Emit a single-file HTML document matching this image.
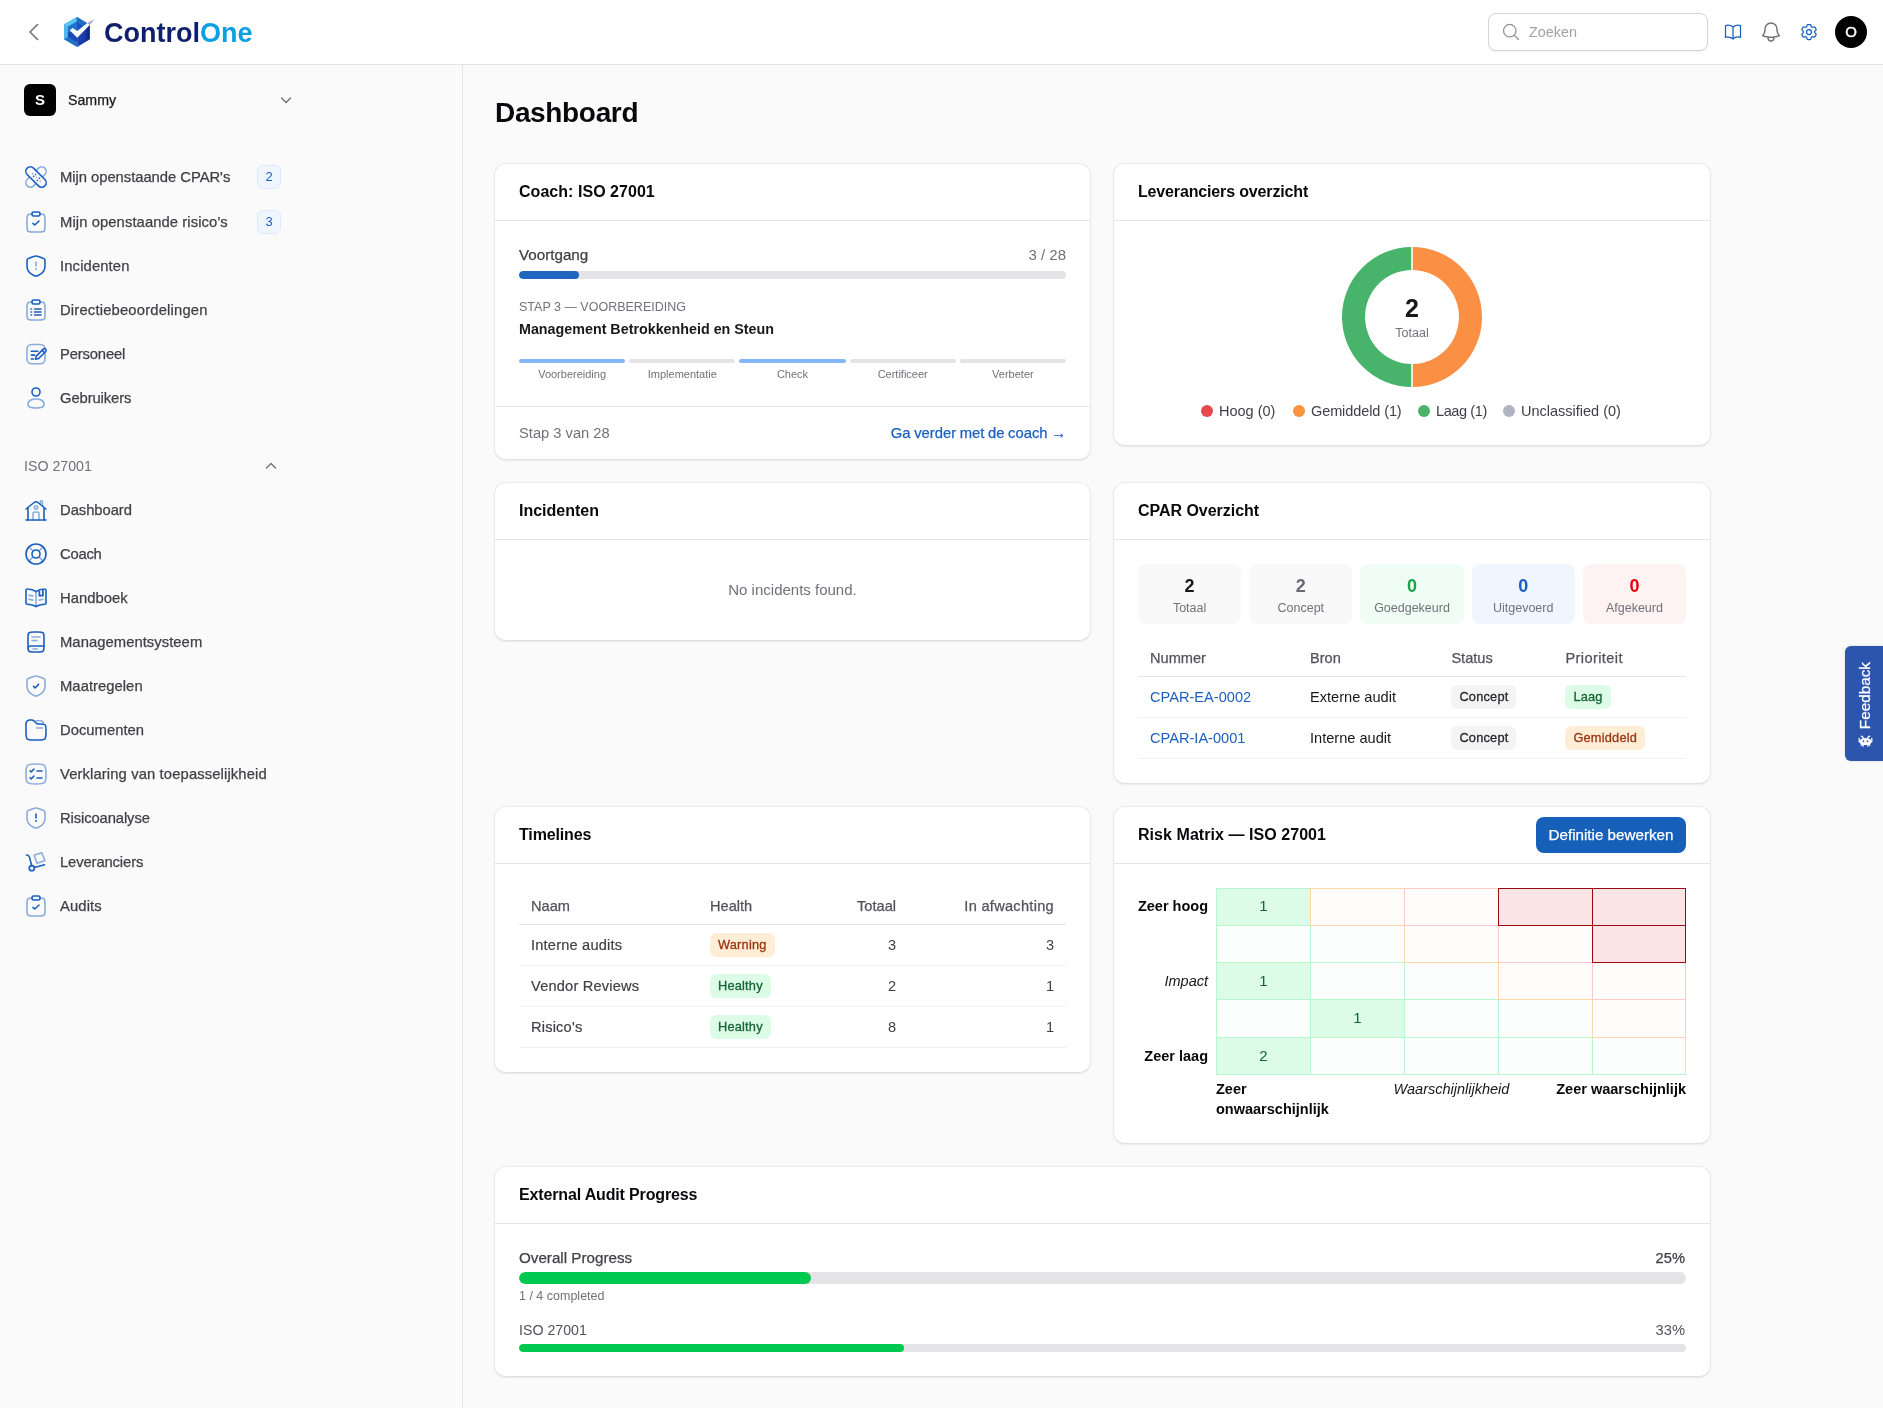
<!DOCTYPE html>
<html lang="nl">
<head>
<meta charset="utf-8">
<title>Dashboard - ControlOne</title>
<style>
*{box-sizing:border-box;margin:0;padding:0}
html,body{width:1883px;height:1408px;overflow:hidden}
body{font-family:"Liberation Sans",Arial,sans-serif;font-size:15px;line-height:20px;color:#3f3f46;background:#fafafa;position:relative;-webkit-font-smoothing:antialiased}
a{color:#1d5fc0;text-decoration:none}
svg{display:block}
/* ---------- top bar ---------- */
.top{position:absolute;left:0;top:0;width:1883px;height:65px;background:#fff;border-bottom:1px solid #e4e4e7}
.back{position:absolute;left:23.2px;top:20px;width:24px;height:24px}
.logo{position:absolute;left:62px;top:14px;width:36px;height:36px}
.brand{position:absolute;left:104px;top:15px;height:36px;line-height:36px;font-size:27px;font-weight:700;color:#0f1f6b;white-space:nowrap}
.brand b{color:#0b9fe4;font-weight:700}
.search{position:absolute;left:1488px;top:13px;width:220px;height:38px;border:1px solid #d4d4d8;border-radius:8px;background:#fff;box-shadow:0 1px 2px rgba(0,0,0,.06)}
.search svg{position:absolute;left:12px;top:8px}
.search span{position:absolute;left:40px;top:8px;color:#a1a1aa;font-size:14.4px;line-height:20px}
.tbi{position:absolute;top:20px;width:24px;height:24px}
.avatar{position:absolute;left:1835px;top:16px;width:32px;height:32px;border-radius:50%;background:#000;color:#fff;font-size:15px;font-weight:400;-webkit-text-stroke:.4px;line-height:32px;text-align:center}
/* ---------- sidebar ---------- */
.side{position:absolute;left:0;top:65px;width:463px;height:1343px;background:#fafafa;border-right:1px solid #e4e4e7}
.team{position:absolute;left:24px;top:19px;width:272px;height:32px}
.team .sq{position:absolute;left:0;top:0;width:32px;height:32px;border-radius:6px;background:#000;color:#fff;font-weight:700;font-size:15px;line-height:32px;text-align:center}
.team .nm{position:absolute;left:44px;top:6px;color:#18181b;font-size:14.2px;-webkit-text-stroke:.25px}
.team svg{position:absolute;left:254px;top:8px}
.nav{position:absolute;left:24px;list-style:none;width:300px}
.nav li{position:relative;height:44px;display:flex;align-items:center}
.main,.side,.top,.fb{will-change:transform}
.l{opacity:.5}
.nav li svg{flex:none;width:24px;height:24px;margin-right:12px}
.nav li span.t{color:#3f3f46;-webkit-text-stroke:.25px;font-size:14.8px;white-space:nowrap}
.nav li span.bd{position:absolute;left:233px;top:10px;width:24px;height:24px;border-radius:6px;background:#eff6ff;border:1px solid #dbeafe;color:#1d5fc0;font-size:13px;line-height:22px;text-align:center}
.sect{position:absolute;left:24px;top:391px;width:260px;height:20px;color:#71717a;font-size:14.2px}
.sect svg{position:absolute;left:239px;top:2px}
/* ---------- main ---------- */
.main{position:absolute;left:463px;top:65px;width:1420px;height:1343px}
h1{position:absolute;left:32px;top:30px;font-size:28px;line-height:36px;font-weight:700;color:#09090b;letter-spacing:-.34px}
.card{position:absolute;background:#fff;border:1px solid #eaeaec;border-bottom-color:#e0e0e2;border-radius:12px;box-shadow:0 1px 2px rgba(0,0,0,.07)}
.card>.hd{height:57px;border-bottom:1px solid #e4e4e7;padding:0 24px;display:flex;align-items:center;justify-content:space-between}
.card>.hd h2{font-size:16px;font-weight:700;color:#09090b;white-space:nowrap;letter-spacing:-.15px}
.card>.bd{padding:24px}
.row{display:flex;justify-content:space-between;align-items:center}
.muted{color:#71717a}
.bar{height:8px;border-radius:4px;background:#e4e4e7;overflow:hidden}
.bar i{display:block;height:100%;border-radius:4px}
.pill{display:inline-block;height:24px;line-height:24px;padding:0 8px;border-radius:6px;font-size:12.8px;font-weight:400;-webkit-text-stroke:.3px;letter-spacing:.2px;white-space:nowrap}
table{border-collapse:collapse;width:100%}
/* coach */
.lbl{color:#3f3f46;-webkit-text-stroke:.25px;font-size:15.2px}
.l2{color:#52525b;font-size:14.2px}
.step{margin-top:20px;font-size:12.5px;line-height:16px;color:#71717a}
.stitle{margin-top:4px;font-size:14.3px;line-height:20px;font-weight:700;color:#18181b;white-space:nowrap}
.phases{display:flex;gap:4px;margin-top:20px}
.phases>div{flex:1;text-align:center}
.phases i{display:block;height:4px;border-radius:2px;background:#e4e4e7}
.phases i.on{background:#84b6f8}
.phases span{display:block;margin-top:4px;font-size:11px;line-height:14px;color:#71717a}
.ft{position:absolute;left:0;right:0;bottom:0;height:53px;border-top:1px solid #e4e4e7;padding:0 24px}
/* donut */
.dn{position:absolute;left:0;width:100%;top:72px;text-align:center;font-size:25px;line-height:30px;font-weight:700;color:#18181b}
.dl{position:absolute;left:0;width:100%;top:104px;text-align:center;font-size:12.5px;line-height:16px;color:#71717a}
.legend{position:absolute;left:0;width:100%;top:180px;font-size:14.5px;line-height:20px;color:#3f3f46;white-space:nowrap}
.legend span{position:absolute;top:0}
.legend i{display:inline-block;width:12px;height:12px;border-radius:50%;margin-right:6px;vertical-align:-1px}
/* stats */
.stats{display:flex;gap:8px}
.stats>div{flex:1;height:60px;border-radius:8px;text-align:center;padding-top:10px}
.stats b{display:block;font-size:18px;line-height:24px;font-weight:700}
.stats span{display:block;font-size:12.5px;line-height:18px;color:#71717a;position:relative;top:.5px}
/* tables */
.tbl{font-size:14.6px}
.tbl th{-webkit-text-stroke:.25px;height:36px;padding:0 12px;text-align:left;font-weight:400;color:#52525b;border-bottom:1px solid #e4e4e7;white-space:nowrap;vertical-align:middle}
.tbl td{height:41px;padding:0 12px;border-bottom:1px solid #f0f0f1;color:#3f3f46;white-space:nowrap;vertical-align:middle}
.tbl td.dk{color:#18181b}
.tbl td.m{-webkit-text-stroke:.2px;letter-spacing:.2px}
.ft .muted{font-size:14.7px}
.tbl .r{text-align:right}
.pill.gy{background:#f4f4f5;color:#27272a}
.pill.gn{background:#dcfce7;color:#166534}
.pill.or{background:#ffedd5;color:#9a3412}
/* risk matrix */
.btn{-webkit-text-stroke:.25px;display:inline-block;width:150px;text-align:center;height:36px;line-height:36px;border-radius:8px;background:#1760ba;color:#fff;font-size:15.2px;white-space:nowrap}
.rm{position:relative;height:279px;padding:0!important}
.rm .yl{position:absolute;left:0;width:94px;text-align:right;color:#18181b;white-space:nowrap;font-size:14.5px}
.rm .yl b,.rm .xl b{font-weight:700;color:#09090b}
.rm .xl{position:absolute;top:215px;color:#18181b;line-height:20px;font-size:14.5px}
.grid{position:absolute;left:102px;top:24px;width:469px;height:186px;display:grid;grid-template-columns:94px 94px 94px 94px 93px;grid-template-rows:37px 37px 37px 38px 37px}
.grid i{font-style:normal;text-align:center;line-height:34px;color:#166534;border:1px solid;margin:0 -1px -1px 0}
.grid i{position:relative}
.grid .g{background:#fbfefd;border-color:#b9f8cf;z-index:1}
.grid .g.f{background:#dcfce7}
.grid .o{background:#fffdfb;border-color:#ffd6a8;z-index:2}
.grid .p{background:#fffcfc;border-color:#ffc9c9;z-index:3}
.grid .d{background:#f9e5e5;border-color:#9f0712;z-index:4}
.sm{font-size:12.5px;line-height:16px}
/* feedback */
.fb{position:absolute;left:1845px;top:646px;width:38px;height:115px;background:#2c55ad;border-radius:6px 0 0 6px;box-shadow:0 0 3px rgba(0,0,0,.15)}
.fb span{position:absolute;left:9.700px;top:16px;writing-mode:vertical-rl;transform:rotate(180deg);color:#fff;-webkit-text-stroke:.25px;font-size:15.300px;line-height:20px;white-space:nowrap}
.fb svg{position:absolute;left:12.800px;top:89px}
</style>
</head>
<body>

<!-- TOPBAR -->
<header class="top">
  <svg class="back" viewBox="0 0 24 24" fill="none" stroke="#71717a" stroke-width="1.6" stroke-linecap="round" stroke-linejoin="round"><path d="M14.5 4.5 7 12l7.5 7.5"/></svg>
  <svg class="logo" viewBox="0 0 36 36">
    <defs><linearGradient id="lgR" x1="0" y1="0" x2="1" y2="0"><stop offset="0" stop-color="#1c47b8"/><stop offset=".6" stop-color="#173aa6"/><stop offset="1" stop-color="#0a2078"/></linearGradient></defs>
    <polygon points="14.8,3 2,10.200 2,25.200 15.250,33 15.250,18" fill="#54b6ee"/>
    <polygon points="14.800,3 2,10.200 5.900,12.600 14.800,7.600" fill="#5cc6f2"/>
    <polygon points="2,25.200 15.250,33 15.250,28.600 5.900,23" fill="#1d70c7"/>
    <polygon points="5.900,12.600 14.900,7.500 14.900,18 5.900,18" fill="#2274cb"/>
    <polygon points="5.900,18 14.900,18 15.250,28.600 5.900,23" fill="#1b4cb8"/>
    <polygon points="14.800,3 24.900,9.100 27.900,11 27.900,25.200 15.250,33" fill="url(#lgR)"/>
    <polygon points="14.800,3 24.900,9.100 21,12.400 14.900,8.200" fill="#1d6fc8"/>
    <polygon points="14.900,8.200 21,12.400 15.250,16.900 14.900,16.500" fill="#1c55c4"/>
    <polygon points="7.750,16.300 10.600,14.100 15.250,16.900 25.250,9.100 28.200,7.500 27.750,11 15.250,23.800" fill="#fff"/>
    <polygon points="25.250,9.100 32.750,5.100 27.750,11" fill="#5a62b0" opacity=".55"/>
  </svg>
  <div class="brand">Control<b>One</b></div>
  <div class="search">
    <svg width="20" height="20" viewBox="0 0 24 24" fill="none" stroke="#8b8d98" stroke-width="1.5" stroke-linecap="round" stroke-linejoin="round"><path d="m21 21-5.197-5.197m0 0A7.500 7.500 0 1 0 5.196 5.196a7.500 7.500 0 0 0 10.607 10.607Z"/></svg>
    <span>Zoeken</span>
  </div>
  <svg class="tbi" style="left:1723px;top:22px;width:20px;height:20px" viewBox="0 0 24 24" fill="none" stroke="#1a5fbf" stroke-width="1.5" stroke-linecap="round" stroke-linejoin="round"><path d="M12 6.042A8.967 8.967 0 0 0 6 3.750c-1.052 0-2.062.180-3 .512v14.250A8.987 8.987 0 0 1 6 18c2.305 0 4.408.867 6 2.292m0-14.250a8.966 8.966 0 0 1 6-2.292c1.052 0 2.062.180 3 .512v14.250A8.987 8.987 0 0 0 18 18a8.967 8.967 0 0 0-6 2.292m0-14.250v14.250"/></svg>
  <svg class="tbi" style="left:1759px;top:20px;width:24px;height:24px" viewBox="0 0 24 24" fill="none" stroke="#71717a" stroke-width="1.5" stroke-linecap="round" stroke-linejoin="round"><path d="M14.857 17.082a23.848 23.848 0 0 0 5.454-1.310A8.967 8.967 0 0 1 18 9.750V9A6 6 0 0 0 6 9v.750a8.967 8.967 0 0 1-2.312 6.022c1.733.640 3.560 1.085 5.455 1.310m5.714 0a24.255 24.255 0 0 1-5.714 0m5.714 0a3 3 0 1 1-5.714 0"/></svg>
  <svg class="tbi" style="left:1799px;top:22px;width:20px;height:20px" viewBox="0 0 24 24" fill="none" stroke="#1a5fbf" stroke-width="1.5" stroke-linecap="round" stroke-linejoin="round"><path d="M9.594 3.940c.090-.542.560-.940 1.110-.940h2.593c.550 0 1.020.398 1.110.940l.213 1.281c.063.374.313.686.645.870.074.040.147.083.220.127.325.196.720.257 1.075.124l1.217-.456a1.125 1.125 0 0 1 1.370.490l1.296 2.247a1.125 1.125 0 0 1-.260 1.431l-1.003.827c-.293.241-.438.613-.430.992a7.723 7.723 0 0 1 0 .255c-.008.378.137.750.430.991l1.004.827c.424.350.534.955.260 1.430l-1.298 2.247a1.125 1.125 0 0 1-1.369.491l-1.217-.456c-.355-.133-.750-.072-1.076.124a6.470 6.470 0 0 1-.220.128c-.331.183-.581.495-.644.869l-.213 1.281c-.090.543-.560.940-1.110.940h-2.594c-.550 0-1.019-.398-1.110-.940l-.213-1.281c-.062-.374-.312-.686-.644-.870a6.520 6.520 0 0 1-.220-.127c-.325-.196-.720-.257-1.076-.124l-1.217.456a1.125 1.125 0 0 1-1.369-.490l-1.297-2.247a1.125 1.125 0 0 1 .260-1.431l1.004-.827c.292-.240.437-.613.430-.991a6.932 6.932 0 0 1 0-.255c.007-.380-.138-.751-.430-.992l-1.004-.827a1.125 1.125 0 0 1-.260-1.430l1.297-2.247a1.125 1.125 0 0 1 1.370-.491l1.216.456c.356.133.751.072 1.076-.124.072-.044.146-.086.220-.128.332-.183.582-.495.644-.869l.214-1.280Z"/><path d="M15 12a3 3 0 1 1-6 0 3 3 0 0 1 6 0Z"/></svg>
  <div class="avatar">O</div>
</header>

<!-- SIDEBAR -->
<aside class="side">
  <div class="team"><div class="sq">S</div><div class="nm">Sammy</div>
    <svg width="16" height="16" viewBox="0 0 16 16" fill="none" stroke="#71717a" stroke-width="1.4" stroke-linecap="round" stroke-linejoin="round"><path d="m3.5 6 4.5 4.5L12.5 6"/></svg>
  </div>
  <ul class="nav" style="top:90px">
    <li style="height:45px;padding-bottom:1px"><svg viewBox="0 0 24 24" fill="none" stroke="#1a5fbf" stroke-width="1.6" stroke-linecap="round" stroke-linejoin="round"><rect class="l" x="-.5" y="7.500" width="25" height="9" rx="4.500" transform="rotate(-45 12 12)"/><rect x="-.5" y="7.500" width="25" height="9" rx="4.500" transform="rotate(45 12 12)" fill="#fafafa"/><g fill="#1a5fbf" stroke="none"><circle cx="11.50" cy="9.60" r=".8"/><circle cx="9.60" cy="11.40" r=".8"/><circle cx="15.40" cy="13.40" r=".8"/><circle cx="13.40" cy="15.40" r=".8"/><circle cx="8.60" cy="8.60" r=".8" opacity=".55"/><circle cx="12.40" cy="12.50" r=".8" opacity=".55"/><circle cx="16.30" cy="16.30" r=".8" opacity=".55"/></g></svg><span class="t" style="letter-spacing:-0.039px">Mijn openstaande CPAR's</span><span class="bd">2</span></li>
    <li><svg viewBox="0 0 24 24" fill="none" stroke="#1a5fbf" stroke-width="1.6" stroke-linecap="round" stroke-linejoin="round"><path class="l" d="M16 4c2.175.012 3.353.109 4.121.877C21 5.756 21 7.17 21 9.998v6c0 2.829 0 4.243-.879 5.122C19.243 22 17.828 22 15 22H9c-2.828 0-4.243 0-5.121-.88C3 20.242 3 18.828 3 15.999v-6c0-2.828 0-4.242.879-5.121C4.647 4.109 5.825 4.012 8 4"/><path d="M8 3.5A1.5 1.5 0 0 1 9.5 2h5A1.5 1.5 0 0 1 16 3.5v1A1.5 1.5 0 0 1 14.5 6h-5A1.5 1.5 0 0 1 8 4.5z"/><path d="m9 13.4 1.714 1.6L15 11"/></svg><span class="t" style="letter-spacing:0.084px">Mijn openstaande risico's</span><span class="bd">3</span></li>
    <li><svg viewBox="0 0 24 24" fill="none" stroke="#1a5fbf" stroke-width="1.6" stroke-linecap="round" stroke-linejoin="round"><path d="M3 10.417c0-3.198 0-4.797.378-5.335c.377-.537 1.88-1.052 4.887-2.081l.573-.196C10.405 2.268 11.188 2 12 2s1.595.268 3.162.805l.573.196c3.007 1.029 4.51 1.544 4.887 2.081C21 5.62 21 7.22 21 10.417v1.574c0 5.638-4.239 8.375-6.899 9.536C13.38 21.842 13.02 22 12 22s-1.38-.158-2.101-.473C7.239 20.365 3 17.63 3 11.991z"/><path class="l" d="M12 8v4"/><circle class="l" cx="12" cy="15" r="1" fill="#1a5fbf" stroke="none"/></svg><span class="t" style="letter-spacing:0.130px">Incidenten</span></li>
    <li><svg viewBox="0 0 24 24" fill="none" stroke="#1a5fbf" stroke-width="1.6" stroke-linecap="round" stroke-linejoin="round"><path class="l" d="M16 4c2.175.012 3.353.109 4.121.877C21 5.756 21 7.17 21 9.998v6c0 2.829 0 4.243-.879 5.122C19.243 22 17.828 22 15 22H9c-2.828 0-4.243 0-5.121-.88C3 20.242 3 18.828 3 15.999v-6c0-2.828 0-4.242.879-5.121C4.647 4.109 5.825 4.012 8 4"/><path d="M8 3.5A1.5 1.5 0 0 1 9.5 2h5A1.5 1.5 0 0 1 16 3.5v1A1.5 1.5 0 0 1 14.5 6h-5A1.5 1.5 0 0 1 8 4.5z"/><path d="M10.5 11H17M7 11h.5M7 14h.5M7 17h.5M10.5 14H17M10.5 17H17"/></svg><span class="t" style="letter-spacing:0.176px">Directiebeoordelingen</span></li>
    <li><svg viewBox="0 0 24 24" fill="none" stroke="#1a5fbf" stroke-width="1.6" stroke-linecap="round" stroke-linejoin="round"><rect class="l" x="3" y="2.5" width="18" height="19.2" rx="4.5"/><path d="M7.3 9.2h6.6M7.3 13.1h3.4M7.3 17h2.2"/><path d="M11.6 17.2l.7-3.1 7-7a1.7 1.7 0 0 1 2.4 2.4l-7 7z" fill="#fafafa"/><path d="m18.1 8.2 2.4 2.4"/></svg><span class="t" style="letter-spacing:-0.156px">Personeel</span></li>
    <li><svg viewBox="0 0 24 24" fill="none" stroke="#1a5fbf" stroke-width="1.6" stroke-linecap="round" stroke-linejoin="round"><circle cx="12" cy="6" r="4"/><path class="l" d="M20 17.5c0 2.485 0 4.5-8 4.5s-8-2.015-8-4.5S7.582 13 12 13s8 2.015 8 4.5Z"/></svg><span class="t" style="letter-spacing:-0.100px">Gebruikers</span></li>
  </ul>
  <div class="sect">ISO 27001
    <svg width="16" height="16" viewBox="0 0 16 16" fill="none" stroke="#71717a" stroke-width="1.4" stroke-linecap="round" stroke-linejoin="round"><path d="m3.5 10 4.5-4.5L12.5 10"/></svg>
  </div>
  <ul class="nav" style="top:423px">
    <li><svg viewBox="0 0 24 24" fill="none" stroke="#1a5fbf" stroke-width="1.6" stroke-linecap="round" stroke-linejoin="round"><path d="M22 22H2"/><path d="m2 11 8.126-6.5a3 3 0 0 1 3.748 0L22 11"/><path class="l" d="M16.300 5.900V3.900a1.100 1.100 0 0 1 2.200 0v3.700"/><path d="M4 22V9.5M20 22V9.5"/><path class="l" d="M15 22v-5c0-1.414 0-2.121-.44-2.56C14.122 14 13.415 14 12 14c-1.414 0-2.121 0-2.56.44C9 14.878 9 15.585 9 17v5"/><circle class="l" cx="12" cy="9.5" r="1.7"/></svg><span class="t" style="letter-spacing:-0.056px">Dashboard</span></li>
    <li><svg viewBox="0 0 24 24" fill="none" stroke="#1a5fbf" stroke-width="1.6" stroke-linecap="round" stroke-linejoin="round"><circle cx="12" cy="12" r="10"/><circle cx="12" cy="12" r="4"/><path class="l" d="m15 9 4-4M5 19l4-4M9 9 5 5M19 19l-4-4"/></svg><span class="t" style="letter-spacing:-0.240px">Coach</span></li>
    <li><svg viewBox="0 0 24 24" fill="none" stroke="#1a5fbf" stroke-width="1.6" stroke-linecap="round" stroke-linejoin="round"><path d="M12 5.6C10.2 4.2 6.8 3.1 3.6 3A1.5 1.5 0 0 0 2 4.5v12.2a1.5 1.5 0 0 0 1.4 1.5c3 .2 6.6 1 8.6 2.3 2-1.300 5.600-2.100 8.600-2.300a1.500 1.500 0 0 0 1.400-1.500V4.500A1.500 1.500 0 0 0 20.400 3c-3.200.100-6.600 1.200-8.400 2.600z"/><path class="l" d="M12 5.600V20.500M5 9.200l3.800.900M5 13.200l3.800.900M15.200 14.100l3.800-.900"/><path d="M15.400 5.300v4.400h3.500V4.400" stroke-width="1.700"/></svg><span class="t" style="letter-spacing:0.025px">Handboek</span></li>
    <li><svg viewBox="0 0 24 24" fill="none" stroke="#1a5fbf" stroke-width="1.6" stroke-linecap="round" stroke-linejoin="round"><path d="M4 8c0-2.828 0-4.243.879-5.121C5.757 2 7.172 2 10 2h4c2.828 0 4.243 0 5.121.879C20 3.757 20 5.172 20 8v8c0 2.828 0 4.243-.879 5.121C18.243 22 16.828 22 14 22h-4c-2.828 0-4.243 0-5.121-.879C4 20.243 4 18.828 4 16z"/><path d="M19.898 16h-12c-.93 0-1.395 0-1.777.102A3 3 0 0 0 4 18.224"/><path class="l" d="M8 7h8M8 10.500h5M9 19h4.500"/></svg><span class="t" style="letter-spacing:0.047px">Managementsysteem</span></li>
    <li><svg viewBox="0 0 24 24" fill="none" stroke="#1a5fbf" stroke-width="1.6" stroke-linecap="round" stroke-linejoin="round"><path class="l" d="M3 10.417c0-3.198 0-4.797.378-5.335c.377-.537 1.88-1.052 4.887-2.081l.573-.196C10.405 2.268 11.188 2 12 2s1.595.268 3.162.805l.573.196c3.007 1.029 4.51 1.544 4.887 2.081C21 5.62 21 7.22 21 10.417v1.574c0 5.638-4.239 8.375-6.899 9.536C13.38 21.842 13.02 22 12 22s-1.38-.158-2.101-.473C7.239 20.365 3 17.63 3 11.991z"/><path d="m9.500 12.400 1.600 1.600 3.400-3.600"/></svg><span class="t" style="letter-spacing:0.036px">Maatregelen</span></li>
    <li><svg viewBox="0 0 24 24" fill="none" stroke="#1a5fbf" stroke-width="1.6" stroke-linecap="round" stroke-linejoin="round"><path d="M22 14v-2.202c0-2.632 0-3.949-.77-4.804a2.984 2.984 0 0 0-.224-.225C20.151 6 18.834 6 16.202 6h-.374c-1.153 0-1.730 0-2.268-.153a4 4 0 0 1-.848-.352C12.224 5.224 11.816 4.815 11 4l-.550-.550c-.274-.274-.410-.410-.554-.530a4 4 0 0 0-2.180-.903C7.530 2 7.336 2 6.950 2c-.883 0-1.324 0-1.692.070A4 4 0 0 0 2.070 5.257C2 5.626 2 6.068 2 6.950V14c0 3.771 0 5.657 1.172 6.828C4.343 22 6.229 22 10 22h4c3.771 0 5.657 0 6.828-1.172C22 19.657 22 17.771 22 14Z"/><path class="l" d="M12.500 10h6M12 2.800h4.600c1.300 0 2.400.800 2.900 2"/></svg><span class="t" style="letter-spacing:0.010px">Documenten</span></li>
    <li><svg viewBox="0 0 24 24" fill="none" stroke="#1a5fbf" stroke-width="1.6" stroke-linecap="round" stroke-linejoin="round"><path class="l" d="M2 12c0-4.714 0-7.071 1.464-8.536C4.93 2 7.286 2 12 2c4.714 0 7.071 0 8.535 1.464C22 4.93 22 7.286 22 12c0 4.714 0 7.071-1.465 8.535C19.072 22 16.714 22 12 22s-7.071 0-8.536-1.465C2 19.072 2 16.714 2 12Z"/><path d="m6 15.800 1.143 1.200L10 14M6 8.800 7.143 10 10 7M13 9h5M13 16h5"/></svg><span class="t" style="letter-spacing:0.116px">Verklaring van toepasselijkheid</span></li>
    <li><svg viewBox="0 0 24 24" fill="none" stroke="#1a5fbf" stroke-width="1.6" stroke-linecap="round" stroke-linejoin="round"><path class="l" d="M3 10.417c0-3.198 0-4.797.378-5.335c.377-.537 1.88-1.052 4.887-2.081l.573-.196C10.405 2.268 11.188 2 12 2s1.595.268 3.162.805l.573.196c3.007 1.029 4.51 1.544 4.887 2.081C21 5.62 21 7.22 21 10.417v1.574c0 5.638-4.239 8.375-6.899 9.536C13.38 21.842 13.02 22 12 22s-1.38-.158-2.101-.473C7.239 20.365 3 17.63 3 11.991z"/><path d="M12 8v4"/><circle cx="12" cy="15" r="1" fill="#1a5fbf" stroke="none"/></svg><span class="t" style="letter-spacing:-0.115px">Risicoanalyse</span></li>
    <li><svg viewBox="0 0 24 24" fill="none" stroke="#1a5fbf" stroke-width="1.6" stroke-linecap="round" stroke-linejoin="round"><path class="l" d="M10.100 5.300 17.700 2.800 20.900 10.400 13 13.300z" stroke-linejoin="round"/><path d="M2.500 5c1.600.100 2.600.600 3 2.100l2.100 8.300"/><circle cx="7.800" cy="18.200" r="2.600"/><path d="M10.300 17.500 20.500 14.700"/></svg><span class="t" style="letter-spacing:-0.125px">Leveranciers</span></li>
    <li><svg viewBox="0 0 24 24" fill="none" stroke="#1a5fbf" stroke-width="1.6" stroke-linecap="round" stroke-linejoin="round"><path class="l" d="M16 4c2.175.012 3.353.109 4.121.877C21 5.756 21 7.17 21 9.998v6c0 2.829 0 4.243-.879 5.122C19.243 22 17.828 22 15 22H9c-2.828 0-4.243 0-5.121-.88C3 20.242 3 18.828 3 15.999v-6c0-2.828 0-4.242.879-5.121C4.647 4.109 5.825 4.012 8 4"/><path d="M8 3.5A1.5 1.5 0 0 1 9.5 2h5A1.5 1.5 0 0 1 16 3.5v1A1.5 1.5 0 0 1 14.5 6h-5A1.5 1.5 0 0 1 8 4.5z"/><path d="m9 13.4 1.714 1.6L15 11"/></svg><span class="t" style="letter-spacing:0.117px">Audits</span></li>
  </ul>
</aside>

<!-- MAIN -->
<main class="main">
  <h1>Dashboard</h1>
  <!-- Coach -->
  <section class="card" style="left:31px;top:98px;width:597px;height:297px">
    <div class="hd"><h2 style="letter-spacing:0.038px">Coach: ISO 27001</h2></div>
    <div class="bd coach">
      <div class="row"><span class="lbl">Voortgang</span><span class="muted">3 / 28</span></div>
      <div class="bar" style="margin-top:6px"><i style="width:60px;background:#1f66c1"></i></div>
      <div class="step">STAP 3 — VOORBEREIDING</div>
      <div class="stitle">Management Betrokkenheid en Steun</div>
      <div class="phases">
        <div><i class="on"></i><span>Voorbereiding</span></div>
        <div><i></i><span>Implementatie</span></div>
        <div><i class="on"></i><span>Check</span></div>
        <div><i></i><span>Certificeer</span></div>
        <div><i></i><span>Verbeter</span></div>
      </div>
    </div>
    <div class="ft row"><span class="muted">Stap 3 van 28</span><a href="#" style="-webkit-text-stroke:.25px;font-size:14.8px;word-spacing:-.5px">Ga verder met de coach →</a></div>
  </section>

  <!-- Leveranciers -->
  <section class="card" style="left:650px;top:98px;width:598px;height:283px">
    <div class="hd"><h2>Leveranciers overzicht</h2></div>
    <div class="bd" style="position:relative;height:224px;padding:0">
      <svg style="position:absolute;left:227px;top:25px" width="142" height="142" viewBox="0 0 142 142">
        <path d="M71 1a70 70 0 0 1 0 140v-23a47 47 0 0 0 0-94z" fill="#fb8f44"/>
        <path d="M71 141a70 70 0 0 1 0-140v23a47 47 0 0 0 0 94z" fill="#48b36b"/>
        <path d="M71 0v25M71 117v25" stroke="#fff" stroke-width="1.6"/>
      </svg>
      <div class="dn">2</div><div class="dl">Totaal</div>
      <div class="legend">
        <span style="left:87px"><i style="background:#e5484d"></i>Hoog (0)</span>
        <span style="left:179px;letter-spacing:-.1px"><i style="background:#fb923c"></i>Gemiddeld (1)</span>
        <span style="left:304px;letter-spacing:-.4px"><i style="background:#48b36b"></i>Laag (1)</span>
        <span style="left:389px"><i style="background:#b0b4c0"></i>Unclassified (0)</span>
      </div>
    </div>
  </section>

  <!-- Incidenten -->
  <section class="card" style="left:31px;top:417px;width:597px;height:159px">
    <div class="hd"><h2 style="letter-spacing:0.000px">Incidenten</h2></div>
    <div class="bd" style="padding-top:40px;text-align:center"><span class="muted">No incidents found.</span></div>
  </section>

  <!-- CPAR -->
  <section class="card" style="left:650px;top:417px;width:598px;height:302px">
    <div class="hd"><h2 style="letter-spacing:-0.029px">CPAR Overzicht</h2></div>
    <div class="bd">
      <div class="stats">
        <div style="background:#f9f9fa"><b style="color:#18181b">2</b><span>Totaal</span></div>
        <div style="background:#f9f9fa"><b style="color:#696977">2</b><span>Concept</span></div>
        <div style="background:#f0fdf4"><b style="color:#16a34a">0</b><span>Goedgekeurd</span></div>
        <div style="background:#eff6ff"><b style="color:#1a5fbf">0</b><span>Uitgevoerd</span></div>
        <div style="background:#fef2f2"><b style="color:#e7000b">0</b><span>Afgekeurd</span></div>
      </div>
      <table class="tbl" style="margin-top:16px">
        <thead><tr><th style="width:160px">Nummer</th><th style="width:141.4px">Bron</th><th style="width:114px">Status</th><th style="letter-spacing:.4px">Prioriteit</th></tr></thead>
        <tbody>
          <tr><td><a href="#">CPAR-EA-0002</a></td><td class="dk">Externe audit</td><td><span class="pill gy">Concept</span></td><td><span class="pill gn">Laag</span></td></tr>
          <tr><td><a href="#">CPAR-IA-0001</a></td><td class="dk">Interne audit</td><td><span class="pill gy">Concept</span></td><td><span class="pill or">Gemiddeld</span></td></tr>
        </tbody>
      </table>
    </div>
  </section>

  <!-- Timelines -->
  <section class="card" style="left:31px;top:741px;width:597px;height:267px">
    <div class="hd"><h2>Timelines</h2></div>
    <div class="bd">
      <table class="tbl">
        <thead><tr><th style="width:179px">Naam</th><th style="width:110px">Health</th><th class="r" style="width:100px">Totaal</th><th class="r" style="letter-spacing:.28px">In afwachting</th></tr></thead>
        <tbody>
          <tr><td class="m">Interne audits</td><td><span class="pill or">Warning</span></td><td class="r">3</td><td class="r">3</td></tr>
          <tr><td class="m">Vendor Reviews</td><td><span class="pill gn">Healthy</span></td><td class="r">2</td><td class="r">1</td></tr>
          <tr><td class="m">Risico's</td><td><span class="pill gn">Healthy</span></td><td class="r">8</td><td class="r">1</td></tr>
        </tbody>
      </table>
    </div>
  </section>

  <!-- Risk matrix -->
  <section class="card" style="left:650px;top:741px;width:598px;height:338px">
    <div class="hd"><h2 style="letter-spacing:0.054px">Risk Matrix — ISO 27001</h2><span class="btn">Definitie bewerken</span></div>
    <div class="bd rm">
      <div class="yl" style="top:32px"><b>Zeer hoog</b></div>
      <div class="yl" style="top:107px"><i>Impact</i></div>
      <div class="yl" style="top:182px"><b>Zeer laag</b></div>
      <div class="grid">
        <i class="g f">1</i><i class="o"></i><i class="p"></i><i class="d"></i><i class="d"></i>
        <i class="g"></i><i class="g"></i><i class="o"></i><i class="p"></i><i class="d"></i>
        <i class="g f" style="padding-top:1px">1</i><i class="g"></i><i class="g"></i><i class="o"></i><i class="p"></i>
        <i class="g"></i><i class="g f" style="padding-top:1px">1</i><i class="g"></i><i class="g"></i><i class="o"></i>
        <i class="g f" style="padding-top:1px">2</i><i class="g"></i><i class="g"></i><i class="g"></i><i class="g"></i>
      </div>
      <div class="xl" style="left:102px;width:130px"><b>Zeer onwaarschijnlijk</b></div>
      <div class="xl" style="left:102px;width:471px;text-align:center"><i>Waarschijnlijkheid</i></div>
      <div class="xl" style="left:372px;width:200px;text-align:right"><b>Zeer waarschijnlijk</b></div>
    </div>
  </section>

  <!-- External audit -->
  <section class="card" style="left:31px;top:1101px;width:1217px;height:211px">
    <div class="hd"><h2>External Audit Progress</h2></div>
    <div class="bd ext">
      <div class="row"><span class="lbl">Overall Progress</span><span class="lbl" style="font-size:14.7px;padding-right:1px">25%</span></div>
      <div class="bar" style="height:12px;border-radius:6px;margin-top:4px"><i style="width:25%;background:#00c950;border-radius:6px"></i></div>
      <div class="sm muted" style="margin-top:4px">1 / 4 completed</div>
      <div class="row" style="margin-top:16px"><span class="l2">ISO 27001</span><span class="l2" style="font-size:14.7px;padding-right:1px">33%</span></div>
      <div class="bar" style="margin-top:4px"><i style="width:33%;background:#00c950"></i></div>
    </div>
  </section>

</main>

<div class="fb"><span>Feedback</span>
  <svg width="15" height="12" viewBox="0 0 15 12"><g fill="none" stroke="#fff" stroke-width="1.300" stroke-linecap="round"><path d="M5.600 3.600C5.200 2.300 4.300 1.500 3.300 1.200M9.400 3.600c.400-1.300 1.300-2.100 2.300-2.400"/><path d="M1.200 3.400v2.200M13.800 3.400v2.200M1 6.700h1.500M12.500 6.700H14M5.100 9.500v1.700M9.900 9.500v1.700M3.700 9.300l-.500 1M11.300 9.300l.500 1"/></g><path d="M2 5.200C2.800 3.600 4.800 2.900 7.500 2.900s4.700.700 5.500 2.300l.300 2c-.300 1.400-1.500 2.600-3 2.900H4.700c-1.500-.300-2.700-1.500-3-2.900z" fill="#fff"/><ellipse cx="5.450" cy="6.300" rx=".850" ry="1.300" fill="#5b7cc4"/><ellipse cx="9.550" cy="6.300" rx=".850" ry="1.300" fill="#5b7cc4"/></svg></div>
</body>
</html>
